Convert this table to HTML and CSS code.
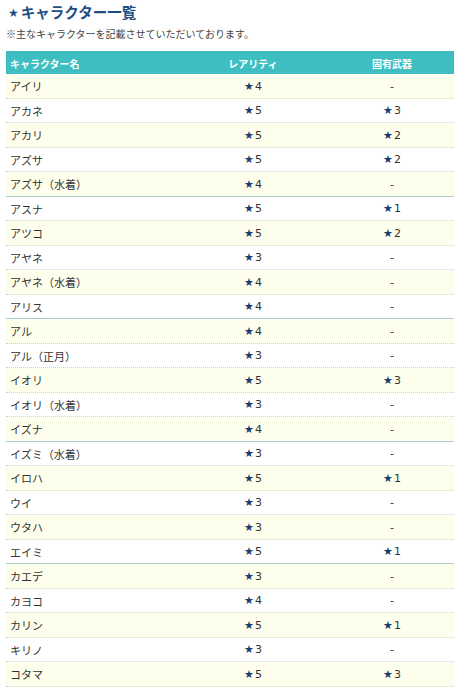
FILE: index.html
```html
<!DOCTYPE html>
<html lang="ja">
<head>
<meta charset="utf-8">
<link rel="stylesheet" href="styles.css">
</head>
<body>
<div class="page">
  <h2 class="title"><span class="tstar">★</span>キャラクター一覧</h2>
  <p class="note">※主なキャラクターを記載させていただいております。</p>
  <div class="table">
    <div class="row head"><div class="c1">キャラクター名</div><div class="c2">レアリティ</div><div class="c3">固有武器</div></div>
    <div class="row odd"><div class="c1">アイリ</div><div class="c2"><span class="st">★</span>4</div><div class="c3">-</div></div>
    <div class="row"><div class="c1">アカネ</div><div class="c2"><span class="st">★</span>5</div><div class="c3"><span class="st">★</span>3</div></div>
    <div class="row odd"><div class="c1">アカリ</div><div class="c2"><span class="st">★</span>5</div><div class="c3"><span class="st">★</span>2</div></div>
    <div class="row"><div class="c1">アズサ</div><div class="c2"><span class="st">★</span>5</div><div class="c3"><span class="st">★</span>2</div></div>
    <div class="row odd sep"><div class="c1">アズサ（水着）</div><div class="c2"><span class="st">★</span>4</div><div class="c3">-</div></div>
    <div class="row"><div class="c1">アスナ</div><div class="c2"><span class="st">★</span>5</div><div class="c3"><span class="st">★</span>1</div></div>
    <div class="row odd"><div class="c1">アツコ</div><div class="c2"><span class="st">★</span>5</div><div class="c3"><span class="st">★</span>2</div></div>
    <div class="row"><div class="c1">アヤネ</div><div class="c2"><span class="st">★</span>3</div><div class="c3">-</div></div>
    <div class="row odd"><div class="c1">アヤネ（水着）</div><div class="c2"><span class="st">★</span>4</div><div class="c3">-</div></div>
    <div class="row sep"><div class="c1">アリス</div><div class="c2"><span class="st">★</span>4</div><div class="c3">-</div></div>
    <div class="row odd"><div class="c1">アル</div><div class="c2"><span class="st">★</span>4</div><div class="c3">-</div></div>
    <div class="row"><div class="c1">アル（正月）</div><div class="c2"><span class="st">★</span>3</div><div class="c3">-</div></div>
    <div class="row odd"><div class="c1">イオリ</div><div class="c2"><span class="st">★</span>5</div><div class="c3"><span class="st">★</span>3</div></div>
    <div class="row"><div class="c1">イオリ（水着）</div><div class="c2"><span class="st">★</span>3</div><div class="c3">-</div></div>
    <div class="row odd sep"><div class="c1">イズナ</div><div class="c2"><span class="st">★</span>4</div><div class="c3">-</div></div>
    <div class="row"><div class="c1">イズミ（水着）</div><div class="c2"><span class="st">★</span>3</div><div class="c3">-</div></div>
    <div class="row odd"><div class="c1">イロハ</div><div class="c2"><span class="st">★</span>5</div><div class="c3"><span class="st">★</span>1</div></div>
    <div class="row"><div class="c1">ウイ</div><div class="c2"><span class="st">★</span>3</div><div class="c3">-</div></div>
    <div class="row odd"><div class="c1">ウタハ</div><div class="c2"><span class="st">★</span>3</div><div class="c3">-</div></div>
    <div class="row sep"><div class="c1">エイミ</div><div class="c2"><span class="st">★</span>5</div><div class="c3"><span class="st">★</span>1</div></div>
    <div class="row odd"><div class="c1">カエデ</div><div class="c2"><span class="st">★</span>3</div><div class="c3">-</div></div>
    <div class="row"><div class="c1">カヨコ</div><div class="c2"><span class="st">★</span>4</div><div class="c3">-</div></div>
    <div class="row odd"><div class="c1">カリン</div><div class="c2"><span class="st">★</span>5</div><div class="c3"><span class="st">★</span>1</div></div>
    <div class="row"><div class="c1">キリノ</div><div class="c2"><span class="st">★</span>3</div><div class="c3">-</div></div>
    <div class="row odd"><div class="c1">コタマ</div><div class="c2"><span class="st">★</span>5</div><div class="c3"><span class="st">★</span>3</div></div>
  </div>
</div>
</body>
</html>
```
FILE: styles.css
```css
html, body {
  margin: 0;
  padding: 0;
  background: #ffffff;
}
.page {
  padding: 0 10px 0 6px;
  font-family: "Noto Sans CJK JP", "Noto Sans", sans-serif;
  color: #333333;
}
.title {
  margin: 0;
  height: 24px;
  line-height: 24px;
  font-size: 14.5px;
  font-weight: bold;
  color: #1f4f82;
  padding-left: 2px;
}
.tstar {
  font-family: "DejaVu Sans", sans-serif;
  font-size: 12px;
  margin-right: 2px;
  position: relative;
  top: -1px;
}
.note {
  margin: 0;
  height: 20px;
  line-height: 20px;
  font-size: 10px;
  color: #444444;
}
.table {
  margin-top: 7px;
  font-size: 11px;
}
.row {
  display: grid;
  grid-template-columns: 170px 154px 124px;
  height: 24.5px;
  align-items: center;
  box-sizing: border-box;
  border-bottom: 1px dotted #cfcfcf;
  background: #ffffff;
}
.row.odd {
  background: #fefeec;
}
.row.sep {
  border-bottom: 1px solid #a8cdd0;
}
.row.head {
  height: 23px;
  background: #3fbec2;
  color: #ffffff;
  font-weight: bold;
  font-size: 10px;
  border-bottom: none;
}
.c1 {
  padding-left: 4px;
  padding-top: 1px;
}
.c2, .c3 {
  text-align: center;
  font-family: "DejaVu Sans", "Noto Sans CJK JP", sans-serif;
  padding-top: 1px;
}
.head .c2, .head .c3 {
  font-family: "Noto Sans CJK JP", sans-serif;
}
.st {
  color: #1b3d6e;
  font-size: 11px;
  margin-right: 1px;
}
```
